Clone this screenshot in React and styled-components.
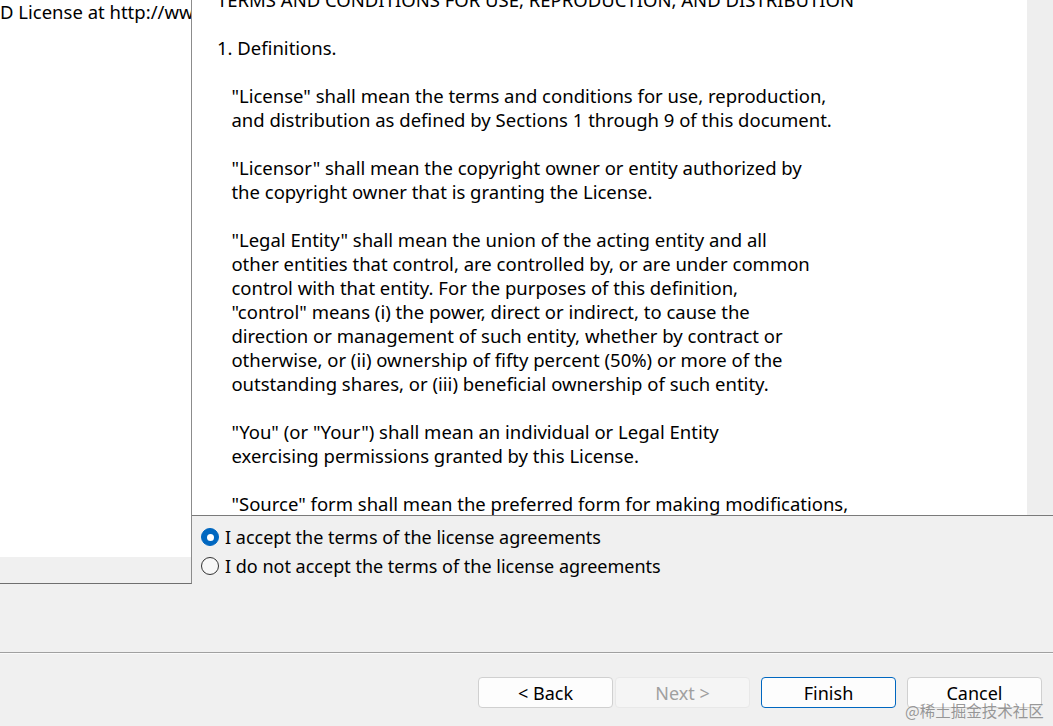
import React from 'react'
import styled, { createGlobalStyle } from 'styled-components'

const Global = createGlobalStyle`
  html, body { margin: 0; padding: 0; background: #f0f0f0; }
  body { font-family: "Noto Sans", "Open Sans", sans-serif; }
`

const Window = styled.div`
  position: relative;
  width: 1053px;
  height: 726px;
  overflow: hidden;
  background: #f0f0f0;
  color: #000;
  font-size: 18px;
`

const Top = styled.div`
  display: flex;
  height: 584px;
`

const SidePane = styled.div`
  width: 191px;
  height: 583px;
  border-right: 1px solid #8c8c8c;
  border-bottom: 1px solid #6f6f6f;
  display: flex;
  flex-direction: column;
  flex-shrink: 0;
`

const SideText = styled.div`
  flex: 1;
  background: #fff;
  overflow: hidden;
  white-space: nowrap;
  line-height: 24px;
  font-size: 18.5px;
`

const SideScroll = styled.div`
  height: 26px;
  background: #f0f0f0;
`

const Main = styled.div`
  flex: 1;
  display: flex;
  flex-direction: column;
`

const LicenseBox = styled.div`
  height: 515px;
  display: flex;
  border-bottom: 1px solid #7a7a7a;
`

const LicenseText = styled.div`
  flex: 1;
  background: #fff;
  overflow: hidden;
  padding-left: 25px;
  white-space: pre;
  line-height: 24px;
  font-size: 18.5px;
`

const Scroller = styled.div`
  margin-top: -12px;
`

const ScrollTrack = styled.div`
  width: 26px;
  background: #eeeeee;
  margin-bottom: 2px;
`

const Radios = styled.div`
  display: flex;
  flex-direction: column;
  gap: 5px;
  padding: 9px 0 0 9px;
`

const RadioRow = styled.label`
  display: flex;
  align-items: center;
  gap: 6px;
  height: 24px;
`

const Dot = styled.span`
  width: 18px;
  height: 18px;
  border-radius: 50%;
  box-sizing: border-box;
  display: flex;
  align-items: center;
  justify-content: center;
  background: ${({ $on }) => ($on ? '#0067c0' : '#f7f7f7')};
  border: 1px solid ${({ $on }) => ($on ? '#0067c0' : '#333')};
  &::after {
    content: '';
    width: 7px;
    height: 7px;
    border-radius: 50%;
    background: #fff;
    display: ${({ $on }) => ($on ? 'block' : 'none')};
  }
`

const Separator = styled.div`
  margin-top: 68px;
  height: 1px;
  background: #a0a0a0;
  border-bottom: 1px solid #fafafa;
`

const ButtonBar = styled.div`
  display: flex;
  justify-content: flex-end;
  padding: 23px 11px 0 0;
`

const Button = styled.button`
  width: 135px;
  height: 31px;
  margin-left: ${({ $gap }) => $gap || 0}px;
  box-sizing: border-box;
  border-radius: 4px;
  font-family: inherit;
  font-size: 18px;
  padding: 0;
  background: ${({ $disabled }) => ($disabled ? '#f5f5f5' : '#fdfdfd')};
  color: ${({ $disabled }) => ($disabled ? '#a0a0a0' : '#000')};
  border: 1px solid
    ${({ $primary, $disabled }) =>
      $primary ? '#0067c0' : $disabled ? '#e8e8e8' : '#d0d0d0'};
`

const Watermark = styled.div`
  position: absolute;
  left: 905px;
  top: 699px;
  font-size: 15.5px;
  color: rgba(120, 120, 120, 0.75);
  font-family: "Noto Sans CJK SC", sans-serif;
  white-space: nowrap;
`

const licenseLines = [
  'TERMS AND CONDITIONS FOR USE, REPRODUCTION, AND DISTRIBUTION',
  '',
  '1. Definitions.',
  '',
  '   "License" shall mean the terms and conditions for use, reproduction,',
  '   and distribution as defined by Sections 1 through 9 of this document.',
  '',
  '   "Licensor" shall mean the copyright owner or entity authorized by',
  '   the copyright owner that is granting the License.',
  '',
  '   "Legal Entity" shall mean the union of the acting entity and all',
  '   other entities that control, are controlled by, or are under common',
  '   control with that entity. For the purposes of this definition,',
  '   "control" means (i) the power, direct or indirect, to cause the',
  '   direction or management of such entity, whether by contract or',
  '   otherwise, or (ii) ownership of fifty percent (50%) or more of the',
  '   outstanding shares, or (iii) beneficial ownership of such entity.',
  '',
  '   "You" (or "Your") shall mean an individual or Legal Entity',
  '   exercising permissions granted by this License.',
  '',
  '   "Source" form shall mean the preferred form for making modifications,',
]

const App = () => {
  return (
    <>
      <Global />
      <Window>
        <Top>
          <SidePane>
            <SideText>D License at http://www.apache.org/licenses/</SideText>
            <SideScroll />
          </SidePane>
          <Main>
            <LicenseBox>
              <LicenseText>
                <Scroller>
                  {licenseLines.map((l, i) => (
                    <div key={i}>{l || ' '}</div>
                  ))}
                </Scroller>
              </LicenseText>
              <ScrollTrack />
            </LicenseBox>
            <Radios>
              <RadioRow>
                <Dot $on />I accept the terms of the license agreements
              </RadioRow>
              <RadioRow>
                <Dot />I do not accept the terms of the license agreements
              </RadioRow>
            </Radios>
          </Main>
        </Top>
        <Separator />
        <ButtonBar>
          <Button>&lt; Back</Button>
          <Button $disabled $gap={2}>Next &gt;</Button>
          <Button $primary $gap={11}>Finish</Button>
          <Button $gap={11}>Cancel</Button>
        </ButtonBar>
        <Watermark>@稀土掘金技术社区</Watermark>
      </Window>
    </>
  )
}

export default App
